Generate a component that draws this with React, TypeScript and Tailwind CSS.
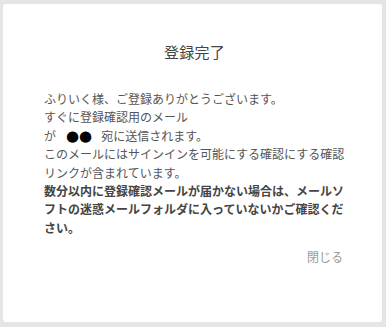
import React from 'react';

const font = { fontFamily: '"Noto Sans CJK JP", "Noto Sans", sans-serif' };

export default function App() {
  return (
    <div className="w-[386px] h-[327px] bg-[#e5e5e5] pt-[4px] pl-[3px] pr-[4px] pb-[5px]" style={font}>
      <div className="h-full bg-white rounded-[3px] pt-[37px] pl-[41px] pr-[37px] flex flex-col">
        <h1 className="text-center text-[15px] leading-[22px] text-[#444] tracking-[0.02em]">登録完了</h1>
        <div className="mt-[27px] w-[301px] text-[12px] leading-[18.4px] text-[#555]">
          <p>ふりいく様、ご登録ありがとうございます。</p>
          <p>すぐに登録確認用のメール</p>
          <p>
            が
            <span className="ml-[10px] mr-[9px] font-['DejaVu_Sans',sans-serif] text-[15px] leading-none text-black">●●</span>
            宛に送信されます。
          </p>
          <p>このメールにはサインインを可能にする確認にする確認リンクが含まれています。</p>
          <p className="font-semibold text-[#444]">
            数分以内に登録確認メールが届かない場合は、メールソフトの迷惑メールフォルダに入っていないかご確認ください。
          </p>
        </div>
        <div className="mt-[11px] w-[301px] flex justify-end">
          <button className="mr-[2px] text-[12px] leading-[18px] text-[#999]">閉じる</button>
        </div>
      </div>
    </div>
  );
}
